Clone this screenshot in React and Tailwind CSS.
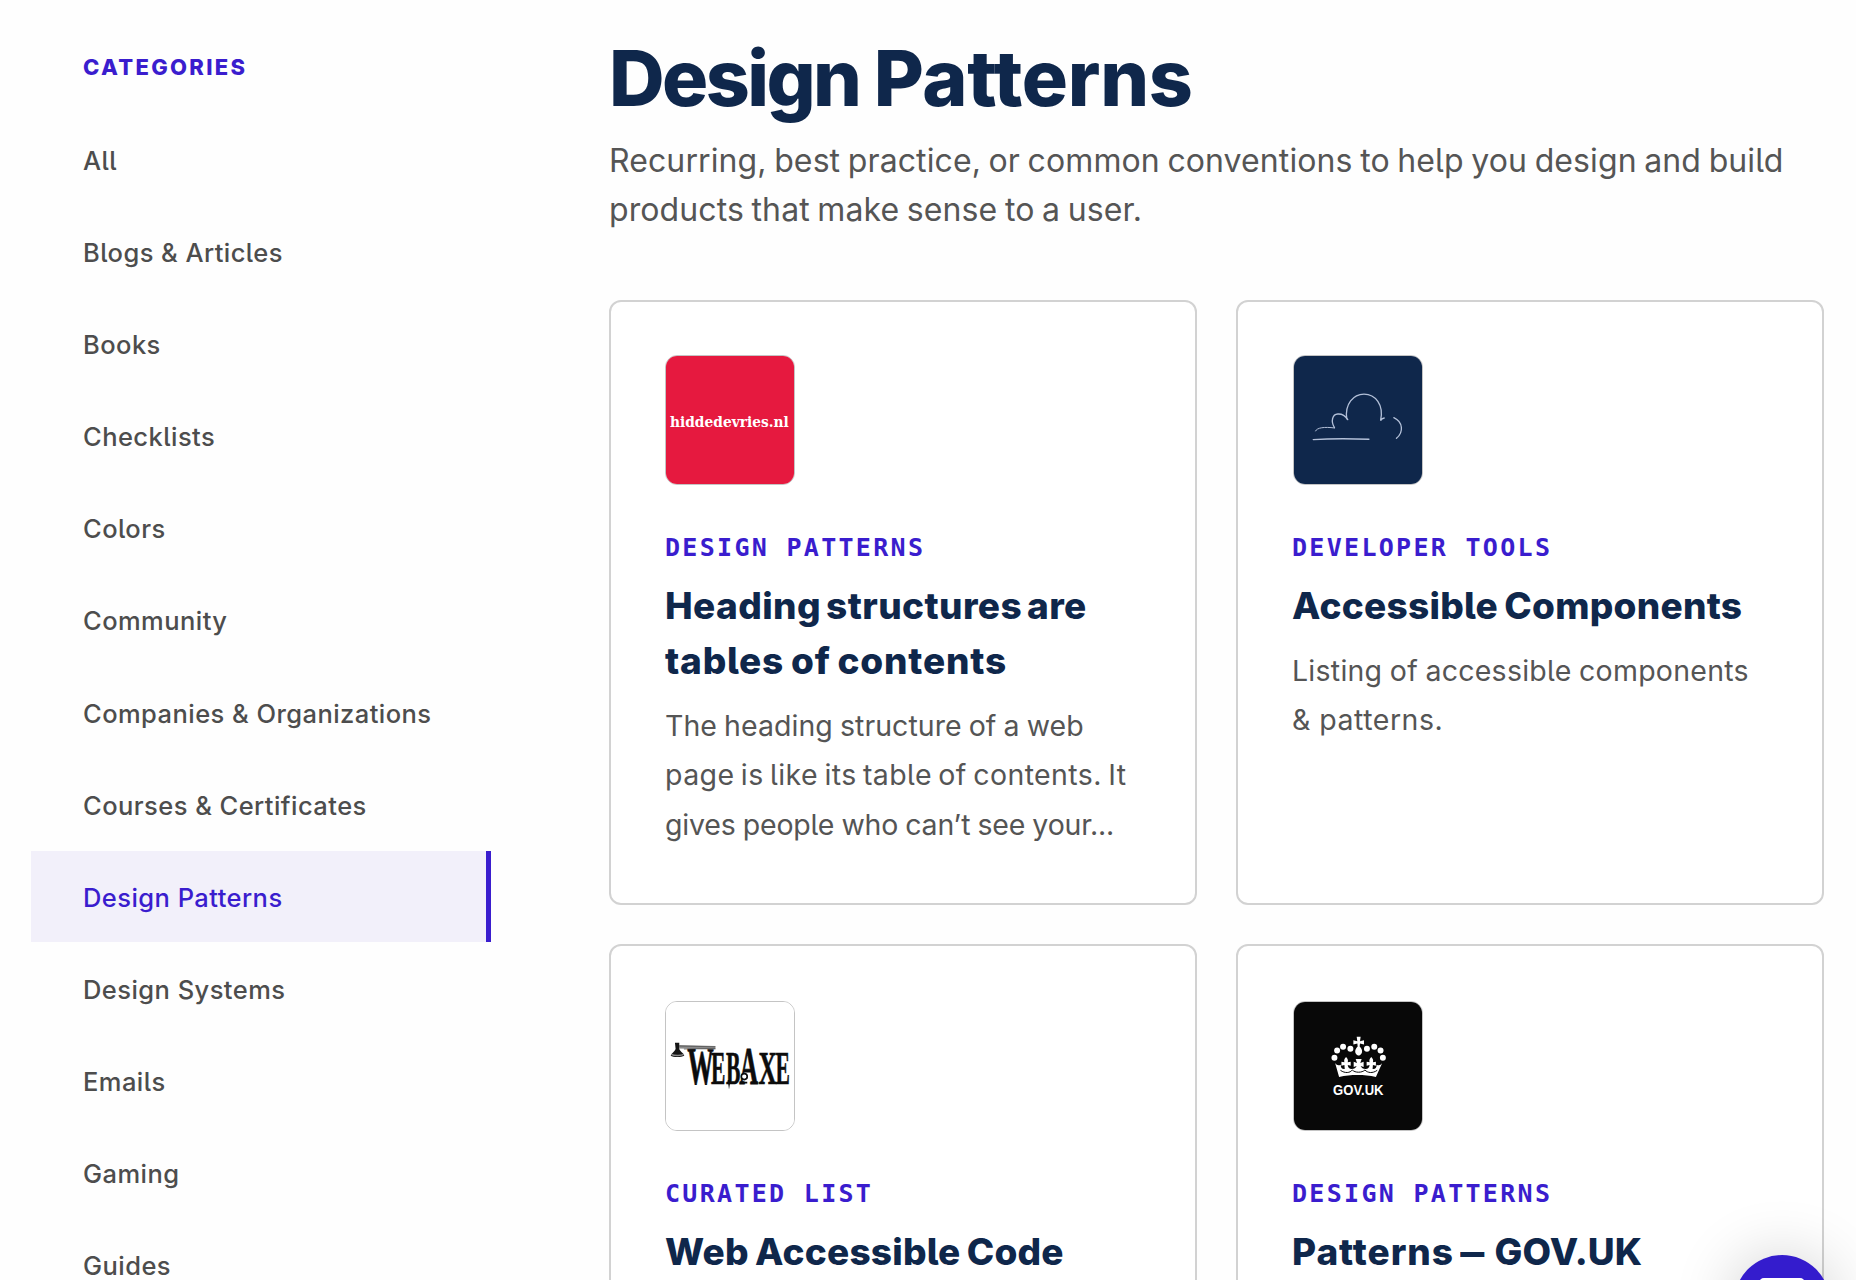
const CATEGORIES = [
  'All',
  'Blogs & Articles',
  'Books',
  'Checklists',
  'Colors',
  'Community',
  'Companies & Organizations',
  'Courses & Certificates',
  'Design Patterns',
  'Design Systems',
  'Emails',
  'Gaming',
  'Guides',
];

function HiddeLogo() {
  return (
    <svg viewBox="78 75 386 386" className="block h-full w-full bg-[#e6193f]">
      <text
        x="90"
        y="289"
        fill="#fff"
        fontSize="46"
        fontWeight="700"
        fontFamily="'DejaVu Serif Condensed','DejaVu Serif',serif"
        textLength="358"
        lengthAdjust="spacingAndGlyphs"
      >
        hiddedevries.nl
      </text>
    </svg>
  );
}

function CloudLogo() {
  return (
    <svg
      viewBox="72 75 386 386"
      className="block h-full w-full bg-[#0f274b]"
      fill="none"
      stroke="#b3c0d8"
      strokeWidth="4"
      strokeLinecap="round"
    >
      <path d="M137 301c4-10 26-13 57-9" strokeWidth="3" />
      <path d="M194 291c-12-20-6-40 10-41 14-1 23 6 30 17" />
      <path d="M231 264c-6-44 20-74 52-74 34 0 61 32 50 80 2-4 6-7 11-8" />
      <path d="M130 327c50-3 110-3 168-1" />
      <path d="M373 261c28 13 30 44 8 62" />
    </svg>
  );
}

function WebAxeLogo() {
  const letter = {
    fontFamily: "'Liberation Serif',serif",
    fontWeight: 700,
    fontSize: 100,
    fill: '#0c0c0c',
    stroke: '#0c0c0c',
    strokeWidth: 1.5,
  };
  return (
    <svg viewBox="78 65 386 386" className="block h-full w-full bg-white">
      <g {...letter}>
        <text transform="translate(142 312) scale(.8 1.56)">W</text>
        <text transform="translate(214 312) scale(.65 1.38)">E</text>
        <text transform="translate(259 313) scale(.65 1.4)">B</text>
        <text transform="translate(299 312) scale(.79 1.62)">A</text>
        <text transform="translate(357 312) scale(.76 1.38)">X</text>
        <text transform="translate(408 312) scale(.65 1.38)">E</text>
      </g>
      <path d="M264 300h9l-5 28z" fill="#0c0c0c" />
      <circle cx="314" cy="290" r="9" fill="#fff" stroke="#0c0c0c" strokeWidth="5" />
      <path d="M304 308h19" stroke="#0c0c0c" strokeWidth="5" />
      <path d="M118 195l109 3v10l-109-3z" fill="#8b8b8b" />
      <path d="M118 198l109 2M132 207l95-2" stroke="#4a4a4a" strokeWidth="2" />
      <path d="M105 188h13v19c3 8 14 13 15 20-8 5-33 6-41 0 4-8 12-12 15-20z" fill="#151515" />
      <path d="M94 223c10 5 30 4 38 0" stroke="#8b8b8b" strokeWidth="4" fill="none" />
    </svg>
  );
}

function GovLogo() {
  return (
    <svg viewBox="72 66 386 386" className="block h-full w-full bg-[#080808]" fill="#fff">
      <circle cx="194" cy="234" r="9" />
      <circle cx="202" cy="212" r="9" />
      <circle cx="220" cy="201" r="9" />
      <circle cx="242" cy="207" r="9" />
      <circle cx="292" cy="207" r="9" />
      <circle cx="314" cy="201" r="9" />
      <circle cx="333" cy="212" r="9" />
      <circle cx="340" cy="234" r="9" />
      <path d="M261 171h12l-2 13 12-3v13l-12-3-1 9c10 10 10 22-1 27h-4c-11-5-11-17-1-27l-1-9-12 3v-13l12 3z" />
      {/* crown base with its points, fleurs and centre cross */}
      <path d="M196 250c5 7 10 8 17 5 0 10 4 14 12 13l-1-12-9 2v-12l9 2c-2-7 0-11 5-16 5 5 7 9 5 16l9-2v12l-9-2c1 8 5 12 12 12 8 0 12-3 15-9l-9 3v-16l10 4-4-12h18l-4 12 10-4v16l-9-3c3 6 7 9 15 9 7 0 11-4 12-12l-9 2v-12l9 2c-2-7 0-11 5-16 5 5 7 9 5 16l9-2v12l-9-2-1 12c8 1 12-3 12-13 7 3 12 2 17-5l-19 42c-36-8-75-8-111 0z" />
      <g fill="none" stroke="#080808" strokeWidth="3">
        <path d="M212 272c14 10 29 8 36-1 8 9 29 9 38 0 8 9 23 11 37 1" />
      </g>
      <text
        x="190"
        y="347"
        fontSize="43"
        fontWeight="700"
        fontFamily="'Liberation Sans',Arial,sans-serif"
        textLength="152"
        lengthAdjust="spacingAndGlyphs"
      >
        GOV.UK
      </text>
    </svg>
  );
}

const CARDS = [
  {
    logo: <HiddeLogo />,
    label: 'Design Patterns',
    pad: 'pt-[53px]',
    thumb: '',
    title: [
      ['Heading structures are', 'tracking-[0.4px] [word-spacing:-3.5px]'],
      ['tables of contents', 'tracking-[0.8px] [word-spacing:-2px]'],
    ],
    text: [
      ['The heading structure of a web', 'tracking-[0.05px] [word-spacing:-1px]'],
      ['page is like its table of contents. It', 'tracking-[0.4px] [word-spacing:-2px]'],
      ['gives people who can’t see your...', 'tracking-[-0.2px] [word-spacing:-0.6px]'],
    ],
  },
  {
    logo: <CloudLogo />,
    label: 'Developer Tools',
    pad: 'pt-[53px]',
    thumb: 'ml-px',
    title: [['Accessible Components', 'tracking-[0.25px] [word-spacing:-2px]']],
    text: [
      ['Listing of accessible components', 'tracking-[0.25px] [word-spacing:-0.8px]'],
      ['& patterns.', 'tracking-[0.5px]'],
    ],
  },
  {
    logo: <WebAxeLogo />,
    label: 'Curated List',
    pad: 'pt-[55px]',
    thumb: '',
    title: [['Web Accessible Code', 'tracking-[0.2px] [word-spacing:-2px]']],
    text: [],
  },
  {
    logo: <GovLogo />,
    label: 'Design Patterns',
    pad: 'pt-[55px]',
    thumb: 'ml-px',
    title: [
      [
        <>
          <span className="tracking-[0.95px]">Patterns</span>{' '}
          <span className="mr-[5px] ml-px inline-block scale-x-130">–</span>{' '}
          <span className="tracking-[0.1px]">GOV.UK</span>
        </>,
        '',
      ],
    ],
    text: [],
  },
];

function Card({ logo, label, pad, thumb, title, text }) {
  return (
    <article className={`h-[605px] rounded-xl border-2 border-[#d2d2d2] bg-white px-[54px] ${pad}`}>
      <div className={`h-[130px] w-[130px] overflow-hidden rounded-xl border border-[#c4c4c4] ${thumb}`}>{logo}</div>
      <div className="mt-12 font-['DejaVu_Sans_Mono',monospace] text-[25px] leading-[30px] font-bold tracking-[2.3px] whitespace-nowrap text-[#3a1dce] uppercase">
        {label}
      </div>
      <h2 className="mt-[15px] text-[37px] leading-[55px] font-extrabold whitespace-nowrap text-[#0f274b]">
        {title.map(([line, spacing], i) => (
          <span key={i} className={`block ${spacing}`}>{line}</span>
        ))}
      </h2>
      <p className="mt-[13px] text-[28.5px] leading-[49.3px] whitespace-nowrap text-[#555]">
        {text.map(([line, spacing], i) => (
          <span key={i} className={`block ${spacing}`}>{line}</span>
        ))}
      </p>
    </article>
  );
}

export default function App() {
  return (
    <div className="relative flex h-[1280px] w-[1856px] overflow-hidden bg-[#fefefe] font-[Inter,sans-serif] [font-feature-settings:'cv05'_1]">
      <nav className="ml-[31px] w-[460px] shrink-0 pt-[52px]">
        <h3 className="pl-[52px] text-[22px] leading-[30px] font-extrabold tracking-[2.3px] text-[#3a1dce]">CATEGORIES</h3>
        <ul className="mt-8 flex flex-col gap-[1.1px]">
          {CATEGORIES.map((name) => (
            <li
              key={name}
              className={
                name === 'Design Patterns'
                  ? 'h-[91px] shrink-0 border-r-5 border-[#3a1dce] bg-[#f2f0fa] pl-[52px] text-[25.5px] leading-[93px] font-medium tracking-[0.45px] text-[#3a1dce]'
                  : 'h-[91px] shrink-0 pl-[52px] text-[25.5px] leading-[94px] font-medium tracking-[0.45px] text-[#4d4d4d]'
              }
            >
              {name}
            </li>
          ))}
        </ul>
      </nav>
      <main className="ml-[118px] w-[1215px] shrink-0 pt-[38px]">
        <h1 className="text-[77px] leading-[80px] font-extrabold whitespace-nowrap text-[#0f274b]">
          <span className="tracking-[-2.6px]">Design </span>
          <span className="tracking-[-0.25px]">Patterns</span>
        </h1>
        <p className="mt-[18px] text-[32px] leading-[49px] tracking-[0.1px] [word-spacing:-1.5px] whitespace-nowrap text-[#555]">
          Recurring, best practice, or common conventions to help you design and build
          <br />
          products that make sense to a user.
        </p>
        <div className="mt-[66px] grid grid-cols-2 gap-[39px]">
          {CARDS.map((card, i) => (
            <Card key={i} {...card} />
          ))}
        </div>
      </main>
      <button
        aria-label="Open chat"
        className="absolute top-[1254.5px] left-[1734px] flex h-24 w-24 items-start justify-center rounded-full bg-[#341ccd] pt-[23.5px] shadow-[0_2px_64px_rgba(0,0,0,0.2)]"
      >
        <svg viewBox="0 0 48 48" className="h-12 w-12" fill="#fff">
          <path d="M6 0h36a5 5 0 0 1 5 5v42l-10-8H6a5 5 0 0 1-5-5V5a5 5 0 0 1 5-5z" />
        </svg>
      </button>
    </div>
  );
}
